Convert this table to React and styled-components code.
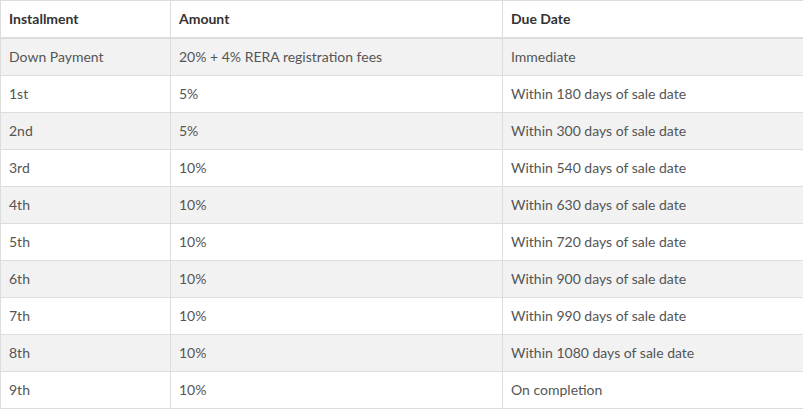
import React from 'react';
import styled, { createGlobalStyle } from 'styled-components';

const rows = [
    ['Down Payment', '20% + 4% RERA registration fees', 'Immediate'],
    ['1st', '5%', 'Within 180 days of sale date'],
    ['2nd', '5%', 'Within 300 days of sale date'],
    ['3rd', '10%', 'Within 540 days of sale date'],
    ['4th', '10%', 'Within 630 days of sale date'],
    ['5th', '10%', 'Within 720 days of sale date'],
    ['6th', '10%', 'Within 900 days of sale date'],
    ['7th', '10%', 'Within 990 days of sale date'],
    ['8th', '10%', 'Within 1080 days of sale date'],
    ['9th', '10%', 'On completion'],
];

export default function App() {
    return (
    <>
        <GlobalStyle />
        <Table>
            <colgroup>
                <col style={{ width: 170 }} />
                <col style={{ width: 332 }} />
                <col style={{ width: 301 }} />
            </colgroup>
            <thead>
                <tr>
                    <HeadCell>Installment</HeadCell>
                    <HeadCell>Amount</HeadCell>
                    <HeadCell>Due Date</HeadCell>
                </tr>
            </thead>
            <tbody>
                {rows.map((row, index) => (
                    <Row key={index} $striped={index % 2 === 0}>
                        {row.map((cell, i) => (<Cell key={i}>{cell}</Cell>))}
                    </Row>
                ))}
            </tbody>
        </Table>
    </>
  );
}

const GlobalStyle = createGlobalStyle`
body {
margin: 0;
background: #ffffff;
font-family: Lato, "Open Sans", sans-serif;
}`;

const Table = styled.table`
width: 803px;
border-collapse: collapse;
table-layout: fixed;
font-size: 14px;
line-height: 20px;
color: #555555;`;

const HeadCell = styled.th`
text-align: left;
font-weight: 700;
color: #333333;
padding: 8px;
border: 1px solid #dddddd;
border-bottom: 2px solid #dddddd;`;

const Row = styled.tr`
background-color: ${props => props.$striped ? '#f2f2f2' : '#ffffff'};`;

const Cell = styled.td`
padding: 8px;
border: 1px solid #dddddd;
white-space: nowrap;`;
